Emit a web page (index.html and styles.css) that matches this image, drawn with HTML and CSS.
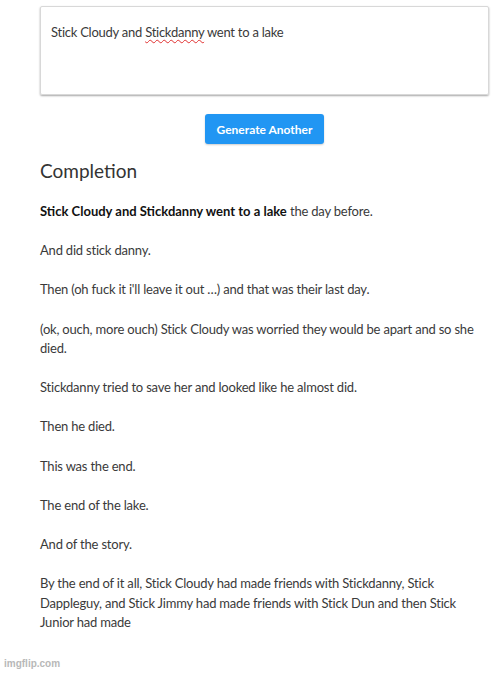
FILE: index.html
```
<!DOCTYPE html>
<html>
<head>
<meta charset="utf-8">
<link rel="stylesheet" href="styles.css">
</head>
<body>
<div class="page">
  <div class="prompt">Stick Cloudy and <span class="misspelled">Stickdanny</span> went to a lake</div>
  <div class="actions"><button class="btn">Generate Another</button></div>
  <h2 class="title">Completion</h2>
  <div class="completion">
    <p><strong>Stick Cloudy and Stickdanny went to a lake</strong> the day before.</p>
    <p>And did stick danny.</p>
    <p>Then (oh fuck it i'll leave it out …) and that was their last day.</p>
    <p>(ok, ouch, more ouch) Stick Cloudy was worried they would be apart and so she died.</p>
    <p>Stickdanny tried to save her and looked like he almost did.</p>
    <p>Then he died.</p>
    <p>This was the end.</p>
    <p>The end of the lake.</p>
    <p>And of the story.</p>
    <p>By the end of it all, Stick Cloudy had made friends with Stickdanny, Stick Dappleguy, and Stick Jimmy had made friends with Stick Dun and then Stick Junior had made</p>
  </div>
</div>
<div class="watermark">imgflip.com</div>
</body>
</html>
```
FILE: styles.css
```
html, body {
  margin: 0;
  padding: 0;
  background: #ffffff;
}
body {
  width: 500px;
  height: 674px;
  overflow: hidden;
  position: relative;
  font-family: Lato, "Liberation Sans", sans-serif;
  color: #333333;
}
.page {
  margin-left: 40px;
  width: 449px;
  padding-top: 6px;
}
.prompt {
  box-sizing: border-box;
  height: 89px;
  border: 1px solid #d8d8d8;
  border-radius: 2px;
  box-shadow: 0 1px 2px rgba(0, 0, 0, 0.35);
  padding: 16px 10px;
  font-size: 13px;
  line-height: 19px;
  letter-spacing: -0.25px;
  color: #3a3a3a;
}
.misspelled {
  text-decoration: underline wavy #e03030;
  text-decoration-thickness: 1px;
  text-underline-offset: 2px;
}
.actions {
  display: flex;
  justify-content: center;
  margin-top: 19px;
}
.btn {
  width: 119px;
  height: 30px;
  border: none;
  border-radius: 3px;
  background: #2196f3;
  color: #ffffff;
  font-family: Lato, "Liberation Sans", sans-serif;
  font-weight: bold;
  font-size: 12px;
  box-shadow: 0 1px 2px rgba(0, 0, 0, 0.2);
  padding: 0;
}
.title {
  margin: 15px 0 0 0;
  font-size: 19px;
  font-weight: normal;
  line-height: 24px;
  color: #333333;
}
.completion {
  margin-top: 19px;
  font-size: 13px;
  line-height: 19.5px;
  letter-spacing: -0.2px;
  color: #3a3a3a;
}
.completion p {
  margin: 0 0 19.7px 0;
}
.completion strong {
  color: #111111;
  letter-spacing: 0;
}
.watermark {
  position: absolute;
  left: 4px;
  top: 658px;
  font-family: "Liberation Sans", Arial, sans-serif;
  font-size: 10px;
  font-weight: bold;
  color: #b8b8b8;
}
```
